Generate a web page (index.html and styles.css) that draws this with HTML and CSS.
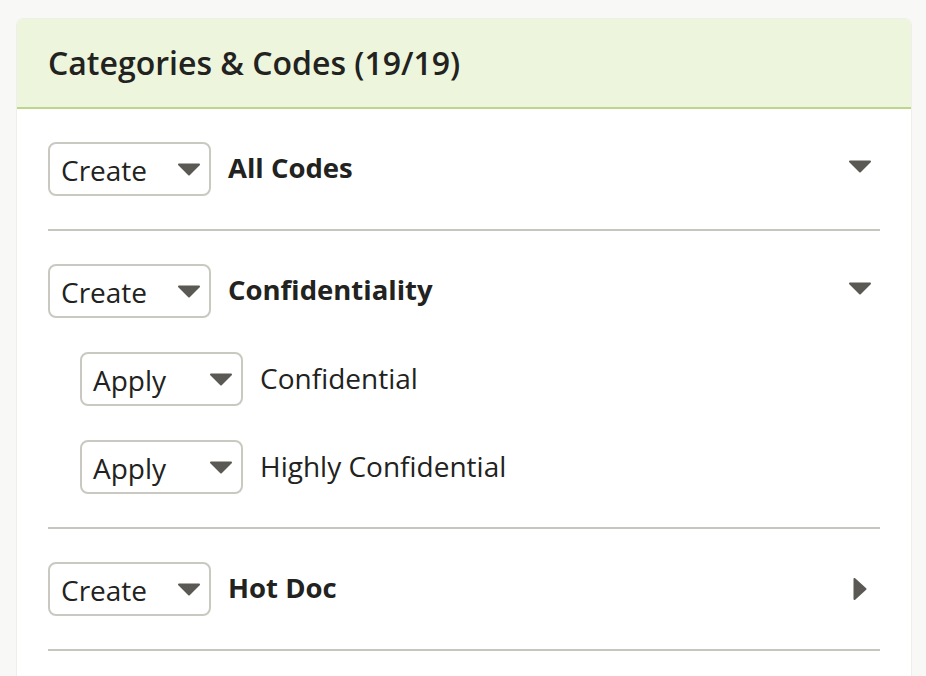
FILE: index.html
```html
<!DOCTYPE html>
<html lang="en">
<head>
<meta charset="utf-8">
<title>Categories &amp; Codes</title>
<link rel="stylesheet" href="styles.css">
</head>
<body>
<div class="page">
  <section class="card">
    <header class="card-head">
      <h2 class="card-title">Categories &amp; Codes (19/19)</h2>
    </header>
    <div class="card-body">
      <div class="group">
        <div class="row">
          <div class="select">
            <span class="select-text">Create</span>
            <svg class="select-arrow" width="24" height="13" viewBox="0 0 24 13"><path d="M2 1.5 H22 L12 11.5 Z" fill="#5a5953" stroke="#5a5953" stroke-width="2" stroke-linejoin="round"/></svg>
          </div>
          <span class="label label-bold">All Codes</span>
          <svg class="caret" width="24" height="13" viewBox="0 0 24 13"><path d="M2 1.5 H22 L12 11.5 Z" fill="#5a5953" stroke="#5a5953" stroke-width="2" stroke-linejoin="round"/></svg>
        </div>
      </div>

      <div class="group">
        <div class="row">
          <div class="select">
            <span class="select-text">Create</span>
            <svg class="select-arrow" width="24" height="13" viewBox="0 0 24 13"><path d="M2 1.5 H22 L12 11.5 Z" fill="#5a5953" stroke="#5a5953" stroke-width="2" stroke-linejoin="round"/></svg>
          </div>
          <span class="label label-bold">Confidentiality</span>
          <svg class="caret" width="24" height="13" viewBox="0 0 24 13"><path d="M2 1.5 H22 L12 11.5 Z" fill="#5a5953" stroke="#5a5953" stroke-width="2" stroke-linejoin="round"/></svg>
        </div>
        <div class="row row-sub">
          <div class="select">
            <span class="select-text">Apply</span>
            <svg class="select-arrow" width="24" height="13" viewBox="0 0 24 13"><path d="M2 1.5 H22 L12 11.5 Z" fill="#5a5953" stroke="#5a5953" stroke-width="2" stroke-linejoin="round"/></svg>
          </div>
          <span class="label">Confidential</span>
        </div>
        <div class="row row-sub">
          <div class="select">
            <span class="select-text">Apply</span>
            <svg class="select-arrow" width="24" height="13" viewBox="0 0 24 13"><path d="M2 1.5 H22 L12 11.5 Z" fill="#5a5953" stroke="#5a5953" stroke-width="2" stroke-linejoin="round"/></svg>
          </div>
          <span class="label">Highly Confidential</span>
        </div>
      </div>

      <div class="group">
        <div class="row">
          <div class="select">
            <span class="select-text">Create</span>
            <svg class="select-arrow" width="24" height="13" viewBox="0 0 24 13"><path d="M2 1.5 H22 L12 11.5 Z" fill="#5a5953" stroke="#5a5953" stroke-width="2" stroke-linejoin="round"/></svg>
          </div>
          <span class="label label-bold">Hot Doc</span>
          <svg class="caret caret-right" width="14" height="24" viewBox="0 0 14 24"><path d="M1.5 2 V22 L12.5 12 Z" fill="#5a5953" stroke="#5a5953" stroke-width="2" stroke-linejoin="round"/></svg>
        </div>
      </div>
    </div>
  </section>
</div>
</body>
</html>
```

FILE: styles.css
```css
* {
  box-sizing: border-box;
}

html, body {
  margin: 0;
  padding: 0;
  background: #f8f8f6;
}

body {
  font-family: "Open Sans", "Noto Sans", "Liberation Sans", sans-serif;
  color: #222220;
}

.page {
  padding: 18px 14px 0 16px;
}

.card {
  background: #ffffff;
  border: 1px solid #eeeeeb;
  border-bottom: none;
  border-radius: 7px 7px 0 0;
  overflow: hidden;
  min-height: 700px;
}

.card-head {
  background: #edf5dc;
  border-bottom: 2px solid #bdd68b;
  height: 90px;
  display: flex;
  align-items: center;
  padding: 0 31px;
}

.card-title {
  margin: 0;
  font-size: 32px;
  font-weight: 600;
  line-height: 1;
  color: #222220;
}

.card-body {
  padding: 0 31px;
}

.group {
  display: flex;
  flex-direction: column;
  gap: 34px;
  padding: 33px 0;
  border-bottom: 2px solid #c6c5be;
}

.row {
  display: flex;
  align-items: center;
  height: 54px;
}

.row-sub {
  padding-left: 32px;
}

.select {
  width: 163px;
  height: 54px;
  border: 2px solid #c9c8c1;
  border-radius: 8px;
  display: flex;
  align-items: center;
  justify-content: space-between;
  padding: 0 8px 0 11px;
  flex-shrink: 0;
  background: #fff;
}

.select-text {
  font-size: 28px;
  line-height: 1;
  color: #222220;
  padding-top: 2px;
}

.select-arrow {
  display: block;
}

.label {
  margin-left: 17px;
  font-size: 28px;
  line-height: 1;
  color: #222220;
  flex: 1;
  padding-bottom: 3px;
}

.label-bold {
  font-weight: 700;
  font-size: 27.5px;
}

.caret {
  display: block;
  margin-right: 8px;
  margin-top: -6px;
}

.caret-right {
  margin-right: 13px;
  margin-top: 0;
}
```
